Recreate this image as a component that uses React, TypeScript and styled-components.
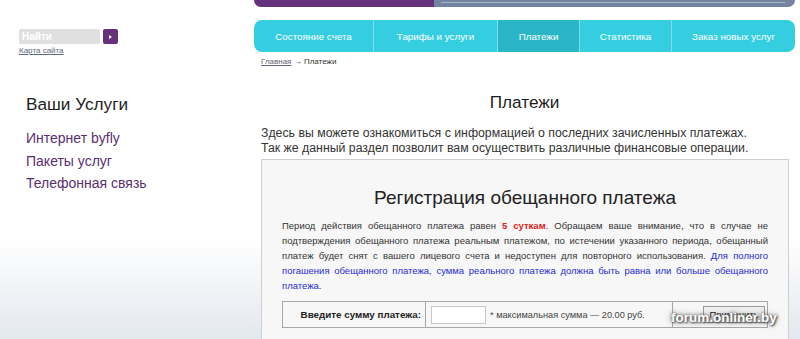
import React from "react";
import styled, { createGlobalStyle } from "styled-components";

const GlobalStyle = createGlobalStyle`
  html, body { margin: 0; padding: 0; }
  body { background: #fff; font-family: "Liberation Sans", Arial, sans-serif; }
`;

const Page = styled.div`
  position: relative;
  display: flex;
  align-items: flex-start;
  width: 800px;
  height: 339px;
  overflow: hidden;
  background: linear-gradient(to bottom, #ffffff 0px, #ffffff 238px, #e3e8ee 339px);
`;

const Sidebar = styled.aside`
  width: 254px;
  flex: none;
  display: flex;
  flex-direction: column;
  align-items: flex-start;
  padding: 29px 0 0 19px;
  box-sizing: border-box;
`;

const SearchRow = styled.form`
  display: flex;
  gap: 3px;
  margin: 0;
`;

const SearchInput = styled.input`
  width: 81px;
  height: 15px;
  box-sizing: border-box;
  border: none;
  border-radius: 2px;
  background: #e0e0e0;
  padding: 0 3px;
  font: bold 10px "Liberation Sans", Arial, sans-serif;
  color: #fff;
  outline: none;
  &::placeholder { color: #fff; }
`;

const SearchButton = styled.button`
  width: 15px;
  height: 15px;
  border: none;
  border-radius: 2px;
  background: #65317a;
  padding: 0;
  display: flex;
  align-items: center;
  justify-content: center;
  &::after {
    content: "";
    border-left: 3px solid #fff;
    border-top: 2.5px solid transparent;
    border-bottom: 2.5px solid transparent;
  }
`;

const SiteMap = styled.a`
  margin-top: 2px;
  font-size: 8px;
  color: #5b6b82;
  text-decoration: underline;
`;

const ServicesTitle = styled.h2`
  margin: 39px 0 0 7px;
  font-weight: normal;
  font-size: 17.2px;
  color: #1e1e1e;
`;

const ServiceList = styled.nav`
  display: flex;
  flex-direction: column;
  gap: 5.5px;
  margin: 15px 0 0 7px;
`;

const ServiceLink = styled.a`
  font-size: 14px;
  line-height: 17px;
  color: #5a2f70;
  text-decoration: none;
`;

const Main = styled.main`
  width: 541px;
  flex: none;
  display: flex;
  flex-direction: column;
  & > * { flex-shrink: 0; }
`;

const TopBar = styled.div`
  display: flex;
  height: 7px;
  border-radius: 0 0 8px 8px;
  overflow: hidden;
`;

const TopPurple = styled.div`
  width: 180px;
  background: #65317a;
`;

const TopSlate = styled.div`
  flex: 1;
  background: #7284a0;
  padding: 2px 10px 0 7px;
  &::before {
    content: "";
    display: block;
    height: 1px;
    background: #a9b6c8;
  }
`;

const Tabs = styled.nav`
  display: flex;
  margin-top: 13px;
  height: 32px;
  background: #35cde0;
  border-radius: 8px;
  overflow: hidden;
`;

const Tab = styled.a<{ $w?: number; $active?: boolean }>`
  ${(p) => (p.$w ? `width: ${p.$w}px; flex: none;` : "flex: 1;")}
  display: flex;
  align-items: center;
  justify-content: center;
  color: #fff;
  font-size: 9.8px;
  text-decoration: none;
  background: ${(p) => (p.$active ? "#2ab6c6" : "transparent")};
  & + & { border-left: 1px solid #7fdfeb; }
`;

const Crumbs = styled.div`
  margin: 5px 0 0 7px;
  font-size: 8px;
  color: #333;
  a { color: #667; text-decoration: underline; }
`;

const PageTitle = styled.h1`
  margin: 26px 0 0;
  text-align: center;
  font-weight: normal;
  font-size: 17.2px;
  color: #1e1e1e;
`;

const Intro = styled.p`
  margin: 13px 0 0 7px;
  font-size: 12.3px;
  line-height: 15px;
  color: #333;
`;

const Box = styled.section`
  margin: 3px 6px 0 7px;
  height: 200px;
  background: #f7f7f7;
  border: 1px solid #cfcfcf;
  padding: 0 20px;
`;

const BoxTitle = styled.h2`
  margin: 27px 0 0;
  text-align: center;
  font-weight: normal;
  font-size: 19px;
  color: #222;
`;

const Notice = styled.p`
  margin: 9px 0 0;
  font-size: 9.5px;
  line-height: 15px;
  color: #333;
  text-align: justify;
  text-align-last: justify;
`;

const Strong = styled.b`
  color: #e51b1b;
`;

const Blue = styled.span`
  color: #2a2ad8;
`;

const Form = styled.table`
  margin-top: 8px;
  width: 100%;
  border-collapse: collapse;
  font-size: 9.2px;
  color: #444;
  td { border: 1px solid #a7a7a7; height: 25px; padding: 0; }
`;

const LabelCell = styled.td`
  width: 138px;
  text-align: right;
  padding-right: 4px !important;
  font-weight: bold;
  font-size: 9.8px;
  color: #222;
`;

const FieldCell = styled.td`
  padding-left: 5px !important;
`;

const FieldWrap = styled.div`
  display: flex;
  align-items: center;
  gap: 4px;
`;

const Amount = styled.input`
  width: 55px;
  height: 18px;
  box-sizing: border-box;
  border: 1px solid #c8c8c8;
  background: #fff;
`;

const ActionCell = styled.td`
  width: 92px;
  text-align: right;
  padding-right: 2px !important;
`;

const Apply = styled.button`
  height: 17px;
  width: 62px;
  padding: 0;
  border: 1px solid #999;
  background: #f0f0f0;
  font: 9.5px "Liberation Sans", Arial, sans-serif;
  color: #111;
`;

const Watermark = styled.div`
  position: absolute;
  left: 671px;
  top: 310px;
  font: bold 13.5px "Liberation Sans", Arial, sans-serif;
  color: #fff;
  text-shadow: 0 0 3px #555, 0 0 6px #777, 1px 1px 2px #444;
  pointer-events: none;
`;

export default function App() {
  return (
    <>
      <GlobalStyle />
      <Page>
        <Sidebar>
          <SearchRow onSubmit={(e) => e.preventDefault()}>
            <SearchInput placeholder="Найти" />
            <SearchButton type="submit" aria-label="Найти" />
          </SearchRow>
          <SiteMap href="#">Карта сайта</SiteMap>
          <ServicesTitle>Ваши Услуги</ServicesTitle>
          <ServiceList>
            <ServiceLink href="#">Интернет byfly</ServiceLink>
            <ServiceLink href="#">Пакеты услуг</ServiceLink>
            <ServiceLink href="#">Телефонная связь</ServiceLink>
          </ServiceList>
        </Sidebar>
        <Main>
          <TopBar>
            <TopPurple />
            <TopSlate />
          </TopBar>
          <Tabs>
            <Tab $w={119} href="#">Состояние счета</Tab>
            <Tab $w={123} href="#">Тарифы и услуги</Tab>
            <Tab $w={81} $active href="#">Платежи</Tab>
            <Tab $w={91} href="#">Статистика</Tab>
            <Tab href="#">Заказ новых услуг</Tab>
          </Tabs>
          <Crumbs>
            <a href="#">Главная</a> → Платежи
          </Crumbs>
          <PageTitle>Платежи</PageTitle>
          <Intro>
            Здесь вы можете ознакомиться с информацией о последних зачисленных платежах.
            <br />
            Так же данный раздел позволит вам осуществить различные финансовые операции.
          </Intro>
          <Box>
            <BoxTitle>Регистрация обещанного платежа</BoxTitle>
            <Notice>
              Период действия обещанного платежа равен <Strong>5 суткам</Strong>. Обращаем ваше внимание, что в случае не
              <br />
              подтверждения обещанного платежа реальным платежом, по истечении указанного периода, обещанный
              <br />
              платеж будет снят с вашего лицевого счета и недоступен для повторного использования.{" "}
              <Blue>
                Для полного
                <br />
                погашения обещанного платежа, сумма реального платежа должна быть равна или больше обещанного
                <br />
                платежа.
              </Blue>
            </Notice>
            <Form>
              <tbody>
                <tr>
                  <LabelCell>Введите сумму платежа:</LabelCell>
                  <FieldCell>
                    <FieldWrap>
                      <Amount />
                      <span>* максимальная сумма — 20.00 руб.</span>
                    </FieldWrap>
                  </FieldCell>
                  <ActionCell>
                    <Apply>Применить</Apply>
                  </ActionCell>
                </tr>
              </tbody>
            </Form>
          </Box>
        </Main>
        <Watermark>forum.onliner.by</Watermark>
      </Page>
    </>
  );
}
